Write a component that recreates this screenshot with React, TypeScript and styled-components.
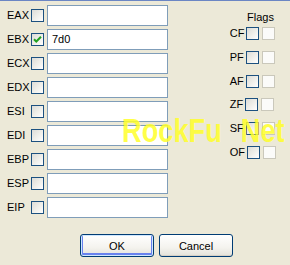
import { Fragment } from 'react';
import styled, { createGlobalStyle } from 'styled-components';

const GlobalStyle = createGlobalStyle`
  html, body {
    margin: 0;
    padding: 0;
    background: #ece9d8;
  }
  body {
    font-family: "Liberation Sans", Arial, sans-serif;
    font-size: 11px;
    color: #000;
  }
`;

const Dialog = styled.div`
  position: relative;
  width: 290px;
  height: 265px;
  box-sizing: border-box;
  background: #ece9d8;
  border-top: 1px solid #6b86c4;
  overflow: hidden;
  display: flex;
  flex-direction: column;
`;

const Body = styled.div`
  display: flex;
  justify-content: space-between;
  padding: 4px 14px 0 7px;
`;

const RegisterGrid = styled.div`
  display: grid;
  grid-template-columns: 24px 16px 121px;
  grid-auto-rows: 21px;
  row-gap: 3px;
  align-items: center;
`;

const RegLabel = styled.span`
  white-space: nowrap;
  line-height: 13px;
`;

const Box = styled.span<{ $disabled?: boolean }>`
  display: inline-flex;
  align-items: center;
  justify-content: center;
  width: 13px;
  height: 13px;
  box-sizing: border-box;
  border: 1px solid ${(p) => (p.$disabled ? '#cac8bb' : '#1c5180')};
  background: ${(p) =>
    p.$disabled
      ? '#fbfbf9'
      : 'linear-gradient(135deg, #dcdcd7 0%, #eeeee9 50%, #ffffff 100%)'};
`;

const TextBox = styled.div`
  height: 21px;
  box-sizing: border-box;
  border: 1px solid #7f9db9;
  background: #fff;
  padding: 3px 0 0 4px;
  line-height: 13px;
`;

const FlagsPanel = styled.div`
  display: flex;
  flex-direction: column;
  align-items: flex-end;
  padding-top: 6px;
`;

const FlagsTitle = styled.div`
  width: 29px;
  line-height: 13px;
  margin-bottom: 3px;
`;

const FlagList = styled.div`
  display: flex;
  flex-direction: column;
  gap: 10.8px;
`;

const FlagRow = styled.div`
  display: flex;
  align-items: center;
  height: 13px;
  gap: 3px;
`;

const FlagLabel = styled.span`
  margin-right: -1px;
  line-height: 13px;
`;

const ButtonRow = styled.div`
  display: flex;
  gap: 5px;
  padding-left: 80px;
  margin-top: auto;
  margin-bottom: 8px;
`;

const Button = styled.button<{ $default?: boolean }>`
  width: 74px;
  height: 23px;
  padding: 0;
  font-family: "Liberation Sans", Arial, sans-serif;
  font-size: 11px;
  color: #000;
  border: 1px solid #003c74;
  border-radius: 3px;
  background: linear-gradient(180deg, #ffffff 0%, #f4f3ee 60%, #e3e2da 100%);
  box-shadow: ${(p) =>
    p.$default
      ? 'inset 0 0 0 1px #cee7ff, inset 0 -1px 0 2px #6982ee'
      : 'inset 0 -1px 0 0 #d6d0c5'};
`;

// yellow site watermark painted over the dialog
const Watermark = styled.div`
  position: absolute;
  left: 122px;
  top: 112px;
  font-family: "Liberation Sans", Arial, sans-serif;
  font-weight: bold;
  font-size: 34px;
  line-height: 34px;
  white-space: pre;
  color: rgba(255, 255, 40, 0.85);
  transform: scaleX(0.8);
  transform-origin: left top;
  pointer-events: none;
`;

const Check = () => (
  <svg width="9" height="9" viewBox="0 0 9 9">
    <path d="M1 4.2 L3.3 6.5 L8 1.8" fill="none" stroke="#21a121" strokeWidth="2" />
  </svg>
);

const registers = [
  { name: 'EAX', value: '', checked: false },
  { name: 'EBX', value: '7d0', checked: true },
  { name: 'ECX', value: '', checked: false },
  { name: 'EDX', value: '', checked: false },
  { name: 'ESI', value: '', checked: false },
  { name: 'EDI', value: '', checked: false },
  { name: 'EBP', value: '', checked: false },
  { name: 'ESP', value: '', checked: false },
  { name: 'EIP', value: '', checked: false },
];

const flags = ['CF', 'PF', 'AF', 'ZF', 'SF', 'OF'];

export default function App() {
  return (
    <>
      <GlobalStyle />
      <Dialog>
        <Body>
          <RegisterGrid>
            {registers.map((r) => (
              <Fragment key={r.name}>
                <RegLabel>{r.name}</RegLabel>
                <Box>{r.checked && <Check />}</Box>
                <TextBox>{r.value}</TextBox>
              </Fragment>
            ))}
          </RegisterGrid>
          <FlagsPanel>
            <FlagsTitle>Flags</FlagsTitle>
            <FlagList>
              {flags.map((f) => (
                <FlagRow key={f}>
                  <FlagLabel>{f}</FlagLabel>
                  <Box />
                  <Box $disabled />
                </FlagRow>
              ))}
            </FlagList>
          </FlagsPanel>
        </Body>
        <ButtonRow>
          <Button $default>OK</Button>
          <Button>Cancel</Button>
        </ButtonRow>
        <Watermark>{'RockFu\u2002\u2009Net'}</Watermark>
      </Dialog>
    </>
  );
}
